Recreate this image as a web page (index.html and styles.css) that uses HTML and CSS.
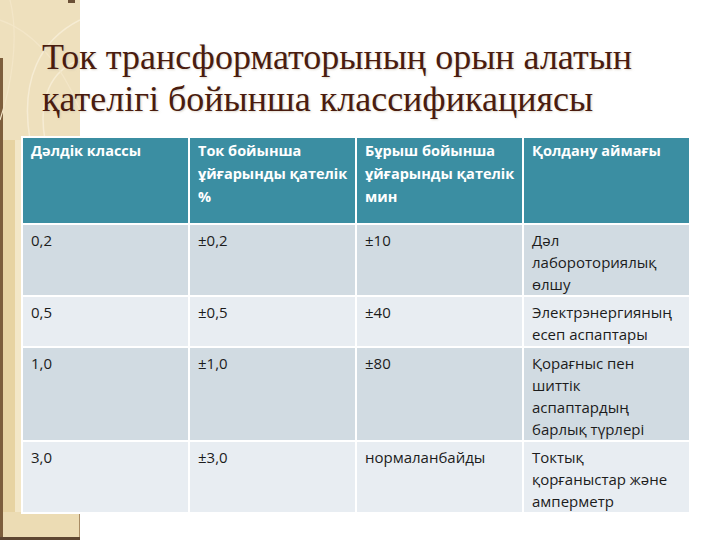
FILE: index.html
```html
<!DOCTYPE html>
<html lang="kk">
<head>
<meta charset="utf-8">
<title>Ток трансформаторы</title>
<link rel="stylesheet" href="styles.css">
</head>
<body>
<div class="slide">
  <svg class="decor" width="80" height="540" viewBox="0 0 80 540" aria-hidden="true">
    <rect x="0" y="0" width="80" height="540" fill="#ecdcb4"/>
    <rect x="0" y="0" width="80" height="140" fill="#eee0bd"/>
    <rect x="0" y="58" width="3" height="482" fill="#7d5e3c"/>
    <rect x="3" y="140" width="12" height="372" fill="#e7d3a2"/>
    <rect x="15" y="140" width="7" height="372" fill="#f3e7c8"/>
    <path d="M80 20 C 40 40, 20 80, 30 140" stroke="#f6ecd4" stroke-width="1.5" fill="none"/>
    <path d="M80 60 C 50 70, 38 100, 45 140" stroke="#f6ecd4" stroke-width="1.5" fill="none"/>
    <path d="M0 20 C 30 30, 60 60, 80 110" stroke="#f3e6c8" stroke-width="1.2" fill="none"/>
    <path d="M10 0 C 20 40, 10 90, 0 120" stroke="#f3e6c8" stroke-width="1.2" fill="none"/>
    <rect x="68" y="0" width="7" height="3" fill="#6b5036"/>
    <rect x="79" y="512" width="1" height="26" fill="#a88b63"/>
    <rect x="0" y="537" width="80" height="3" fill="#5e4631"/>
  </svg>
  <div class="content">
    <h1 class="title">Ток трансформаторының орын алатын<br>қателігі бойынша классификациясы</h1>
    <table class="grid">
      <thead>
        <tr class="head">
          <th>Дәлдік классы</th>
          <th>Ток бойынша<br>ұйғарынды қателік<br>%</th>
          <th>Бұрыш бойынша<br>ұйғарынды қателік<br>мин</th>
          <th>Қолдану аймағы</th>
        </tr>
      </thead>
      <tbody>
        <tr class="odd r1">
          <td>0,2</td><td>±0,2</td><td>±10</td><td>Дәл<br>лабороториялық<br>өлшу</td>
        </tr>
        <tr class="even r2">
          <td>0,5</td><td>±0,5</td><td>±40</td><td>Электрэнергияның<br>есеп аспаптары</td>
        </tr>
        <tr class="odd r3">
          <td>1,0</td><td>±1,0</td><td>±80</td><td>Қорағныс пен<br>шиттік<br>аспаптардың<br>барлық түрлері</td>
        </tr>
        <tr class="even r4">
          <td>3,0</td><td>±3,0</td><td>нормаланбайды</td><td>Токтық<br>қорғаныстар және<br>амперметр</td>
        </tr>
      </tbody>
    </table>
  </div>
</div>
</body>
</html>
```

FILE: styles.css
```css
html, body {
  margin: 0;
  padding: 0;
  background: #ffffff;
}
.slide {
  position: relative;
  width: 720px;
  height: 540px;
  overflow: hidden;
  background: #ffffff;
}
.decor {
  position: absolute;
  left: 0;
  top: 0;
  z-index: 0;
}
.content {
  position: relative;
  z-index: 1;
  padding: 36px 0 0 21px;
}
.title {
  margin: 0 0 0 21px;
  font-family: "Liberation Serif", "Times New Roman", serif;
  font-weight: normal;
  font-size: 36px;
  line-height: 42px;
  color: #4a1c0f;
  text-shadow: 1px 1px 2px rgba(200, 190, 170, 0.6);
}
.grid {
  margin-top: 16px;
  width: 670px;
  border-collapse: collapse;
  table-layout: fixed;
  font-family: "Open Sans", "Liberation Sans", sans-serif;
  font-size: 15px;
  line-height: 22px;
}
.grid th, .grid td {
  border: 2px solid #ffffff;
  text-align: left;
  vertical-align: top;
  padding: 4px 2px 0 8px;
  white-space: nowrap;
}
.grid th {
  background: #3b8ea2;
  color: #ffffff;
  font-weight: bold;
  font-size: 14.5px;
  padding-top: 1px;
  line-height: 23px;
}
.head { height: 87px; }
.grid td { color: #1c1c1c; }
.odd td { background: #d1dbe2; }
.even td { background: #e8edf2; }
.r1 { height: 72px; }
.r2 { height: 51px; }
.r3 { height: 93px; }
.r4 { height: 72px; }
```
